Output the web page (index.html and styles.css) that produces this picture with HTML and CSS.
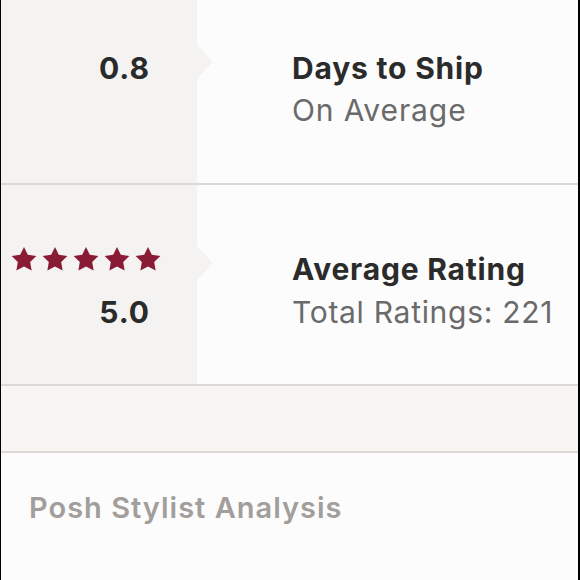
FILE: index.html
```html
<!DOCTYPE html>
<html>
<head>
<meta charset="utf-8">
<link rel="stylesheet" href="styles.css">
</head>
<body>
<div class="frame">
  <div class="scroll">
    <div class="row">
      <div class="left">
        <div class="num">0.8</div>
      </div>
      <div class="right">
        <div class="title">Days to Ship</div>
        <div class="sub">On Average</div>
      </div>
    </div>
    <div class="row">
      <div class="left">
        <div class="stars">
          <svg class="star" viewBox="0 0 24 23"><polygon points="12,0.5 15.53,7.65 23.41,8.79 17.71,14.35 19.05,22.21 12,18.5 4.95,22.21 6.29,14.35 0.59,8.79 8.47,7.65"/></svg>
          <svg class="star" viewBox="0 0 24 23"><polygon points="12,0.5 15.53,7.65 23.41,8.79 17.71,14.35 19.05,22.21 12,18.5 4.95,22.21 6.29,14.35 0.59,8.79 8.47,7.65"/></svg>
          <svg class="star" viewBox="0 0 24 23"><polygon points="12,0.5 15.53,7.65 23.41,8.79 17.71,14.35 19.05,22.21 12,18.5 4.95,22.21 6.29,14.35 0.59,8.79 8.47,7.65"/></svg>
          <svg class="star" viewBox="0 0 24 23"><polygon points="12,0.5 15.53,7.65 23.41,8.79 17.71,14.35 19.05,22.21 12,18.5 4.95,22.21 6.29,14.35 0.59,8.79 8.47,7.65"/></svg>
          <svg class="star" viewBox="0 0 24 23"><polygon points="12,0.5 15.53,7.65 23.41,8.79 17.71,14.35 19.05,22.21 12,18.5 4.95,22.21 6.29,14.35 0.59,8.79 8.47,7.65"/></svg>
        </div>
        <div class="num num-second">5.0</div>
      </div>
      <div class="right">
        <div class="title">Average Rating</div>
        <div class="sub sub-second">Total Ratings: 221</div>
      </div>
    </div>
    <div class="band"></div>
    <div class="section">
      <div class="heading">Posh Stylist Analysis</div>
    </div>
  </div>
</div>
</body>
</html>
```

FILE: styles.css
```css
html, body {
  margin: 0;
  padding: 0;
  height: 100%;
  overflow: hidden;
  background: #000;
}
.frame {
  height: 580px;
  width: 577px;
  margin-left: 1px;
  background: #fcfcfc;
  overflow: hidden;
  font-family: Inter, "Liberation Sans", sans-serif;
}
.scroll {
  margin-top: -16px;
}
.row {
  display: flex;
  height: 201px;
  box-sizing: border-box;
  border-bottom: 2px solid #dcd8d6;
}
.left {
  position: relative;
  width: 196px;
  flex: none;
  background: #f4f3f1;
  box-sizing: border-box;
  padding: 63px 47px 0 0;
  display: flex;
  flex-direction: column;
  align-items: flex-end;
}
.left::after {
  content: "";
  position: absolute;
  left: 100%;
  top: 61px;
  width: 0;
  height: 0;
  border-left: 16px solid #f4f3f1;
  border-top: 17px solid transparent;
  border-bottom: 17px solid transparent;
}
.right {
  flex: 1;
  padding: 63px 0 0 95px;
}
.num {
  font-size: 30px;
  font-weight: 700;
  line-height: 42px;
  color: #2a2a2a;
  letter-spacing: 1px;
}
.num-second {
  line-height: 45px;
}
.title {
  font-size: 30px;
  font-weight: 700;
  line-height: 42px;
  color: #2b2b2b;
  letter-spacing: 0.8px;
}
.sub {
  font-size: 30px;
  font-weight: 400;
  line-height: 42px;
  color: #6a6a6a;
  letter-spacing: 0.9px;
}
.sub-second {
  line-height: 45px;
  letter-spacing: 0.7px;
}
.stars {
  display: flex;
  gap: 5px;
  height: 44px;
  box-sizing: border-box;
  margin-right: -11px;
  margin-top: -2px;
}
.star {
  width: 26px;
  height: 26px;
  fill: #8a1b35;
}
.band {
  height: 67px;
  box-sizing: border-box;
  background: #f7f6f3;
  border-bottom: 2px solid #dcd8d6;
}
.section {
  padding: 35px 0 0 28px;
}
.heading {
  font-size: 29px;
  font-weight: 600;
  line-height: 40px;
  color: #a19e9b;
  letter-spacing: 1px;
}
```
